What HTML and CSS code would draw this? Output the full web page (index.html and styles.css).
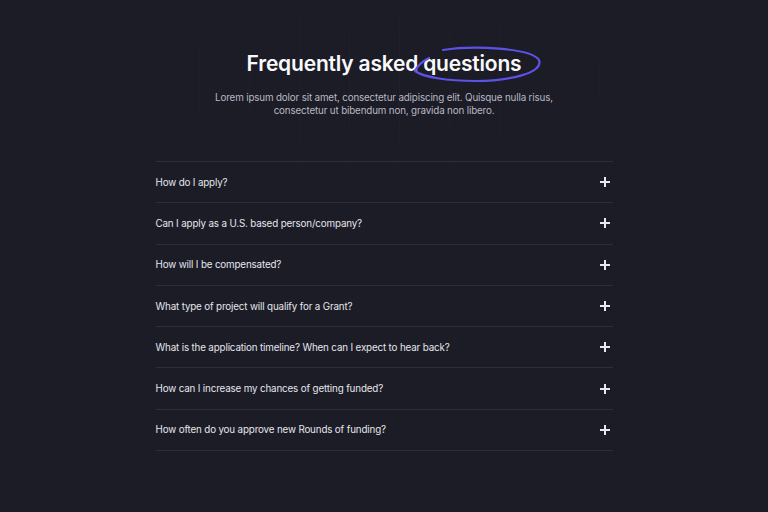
FILE: index.html
```html
<!DOCTYPE html>
<html lang="en">
<head>
    <meta charset="UTF-8">
    <title>FAQ</title>
    <link rel="stylesheet" href="styles.css">
</head>
<body>
    <div class="grid-glow"></div>
    <section class="faq">
        <header class="faq-header">
            <h1 class="faq-title">Frequently asked <span class="circled">questions
                <svg class="scribble" viewBox="0 0 134 40" preserveAspectRatio="none">
                    <path d="M32 4 C62 -1 120 2 128 14 C133 27 98 35 64 35 C36 35 12 31 4 25 M4 25 C7 19 12 15 18 12"
                          fill="none" stroke="#5d52e6" stroke-width="2.2" stroke-linecap="round"/>
                </svg>
            </span></h1>
            <p class="faq-intro">Lorem ipsum dolor sit amet, consectetur adipiscing elit. Quisque nulla risus, consectetur ut bibendum non, gravida non libero.</p>
        </header>

        <ul class="faq-list">
            <li class="faq-item">How do I apply?<svg class="plus" viewBox="0 0 10 10"><path d="M5 0v10M0 5h10"/></svg></li>
            <li class="faq-item">Can I apply as a U.S. based person/company?<svg class="plus" viewBox="0 0 10 10"><path d="M5 0v10M0 5h10"/></svg></li>
            <li class="faq-item">How will I be compensated?<svg class="plus" viewBox="0 0 10 10"><path d="M5 0v10M0 5h10"/></svg></li>
            <li class="faq-item">What type of project will qualify for a Grant?<svg class="plus" viewBox="0 0 10 10"><path d="M5 0v10M0 5h10"/></svg></li>
            <li class="faq-item">What is the application timeline? When can I expect to hear back?<svg class="plus" viewBox="0 0 10 10"><path d="M5 0v10M0 5h10"/></svg></li>
            <li class="faq-item">How can I increase my chances of getting funded?<svg class="plus" viewBox="0 0 10 10"><path d="M5 0v10M0 5h10"/></svg></li>
            <li class="faq-item">How often do you approve new Rounds of funding?<svg class="plus" viewBox="0 0 10 10"><path d="M5 0v10M0 5h10"/></svg></li>
        </ul>
    </section>
</body>
</html>
```

FILE: styles.css
```css
body {
    margin: 0;
    background: #1c1c27;
    color: #e8e8ee;
    font-family: Inter, "Noto Sans", sans-serif;
    min-height: 512px;
    position: relative;
}
/* faint vertical lines behind the heading */
.grid-glow {
    position: absolute;
    left: 0;
    top: 0;
    width: 100%;
    height: 200px;
    background-image: repeating-linear-gradient(90deg, transparent 0 49px, rgba(255, 255, 255, 0.025) 49px 50px);
    -webkit-mask-image: radial-gradient(ellipse at 50% 40%, #000 0%, transparent 70%);
    mask-image: radial-gradient(ellipse at 50% 40%, #000 0%, transparent 70%);
    pointer-events: none;
}
.faq {
    position: relative;
    width: 457px;
    margin: 0 auto;
    padding-top: 49px;
}
.faq-header {
    text-align: center;
    margin-bottom: 44px;
}
.faq-title {
    margin: 0;
    font-size: 21px;
    font-weight: 600;
    letter-spacing: -0.2px;
    color: #fafafc;
    line-height: 30px;
}
.circled {
    position: relative;
}
.scribble {
    position: absolute;
    left: -12px;
    top: -5px;
    width: 134px;
    height: 40px;
}
.faq-intro {
    margin: 12px auto 0;
    width: 380px;
    font-size: 9.8px;
    letter-spacing: -0.15px;
    line-height: 13px;
    color: #b9b9c2;
}
.faq-list {
    list-style: none;
    margin: 0;
    padding: 0;
    border-top: 1px solid #2e2e3b;
}
.faq-item {
    display: flex;
    justify-content: space-between;
    align-items: center;
    height: 40.3px;
    border-bottom: 1px solid #2e2e3b;
    font-size: 9.8px;
    letter-spacing: -0.15px;
    color: #e6e6ec;
}
.plus {
    width: 10px;
    height: 10px;
    margin-right: 3px;
    fill: none;
    stroke: #e8e8ee;
    stroke-width: 1.6;
    shape-rendering: crispEdges;
}
```
